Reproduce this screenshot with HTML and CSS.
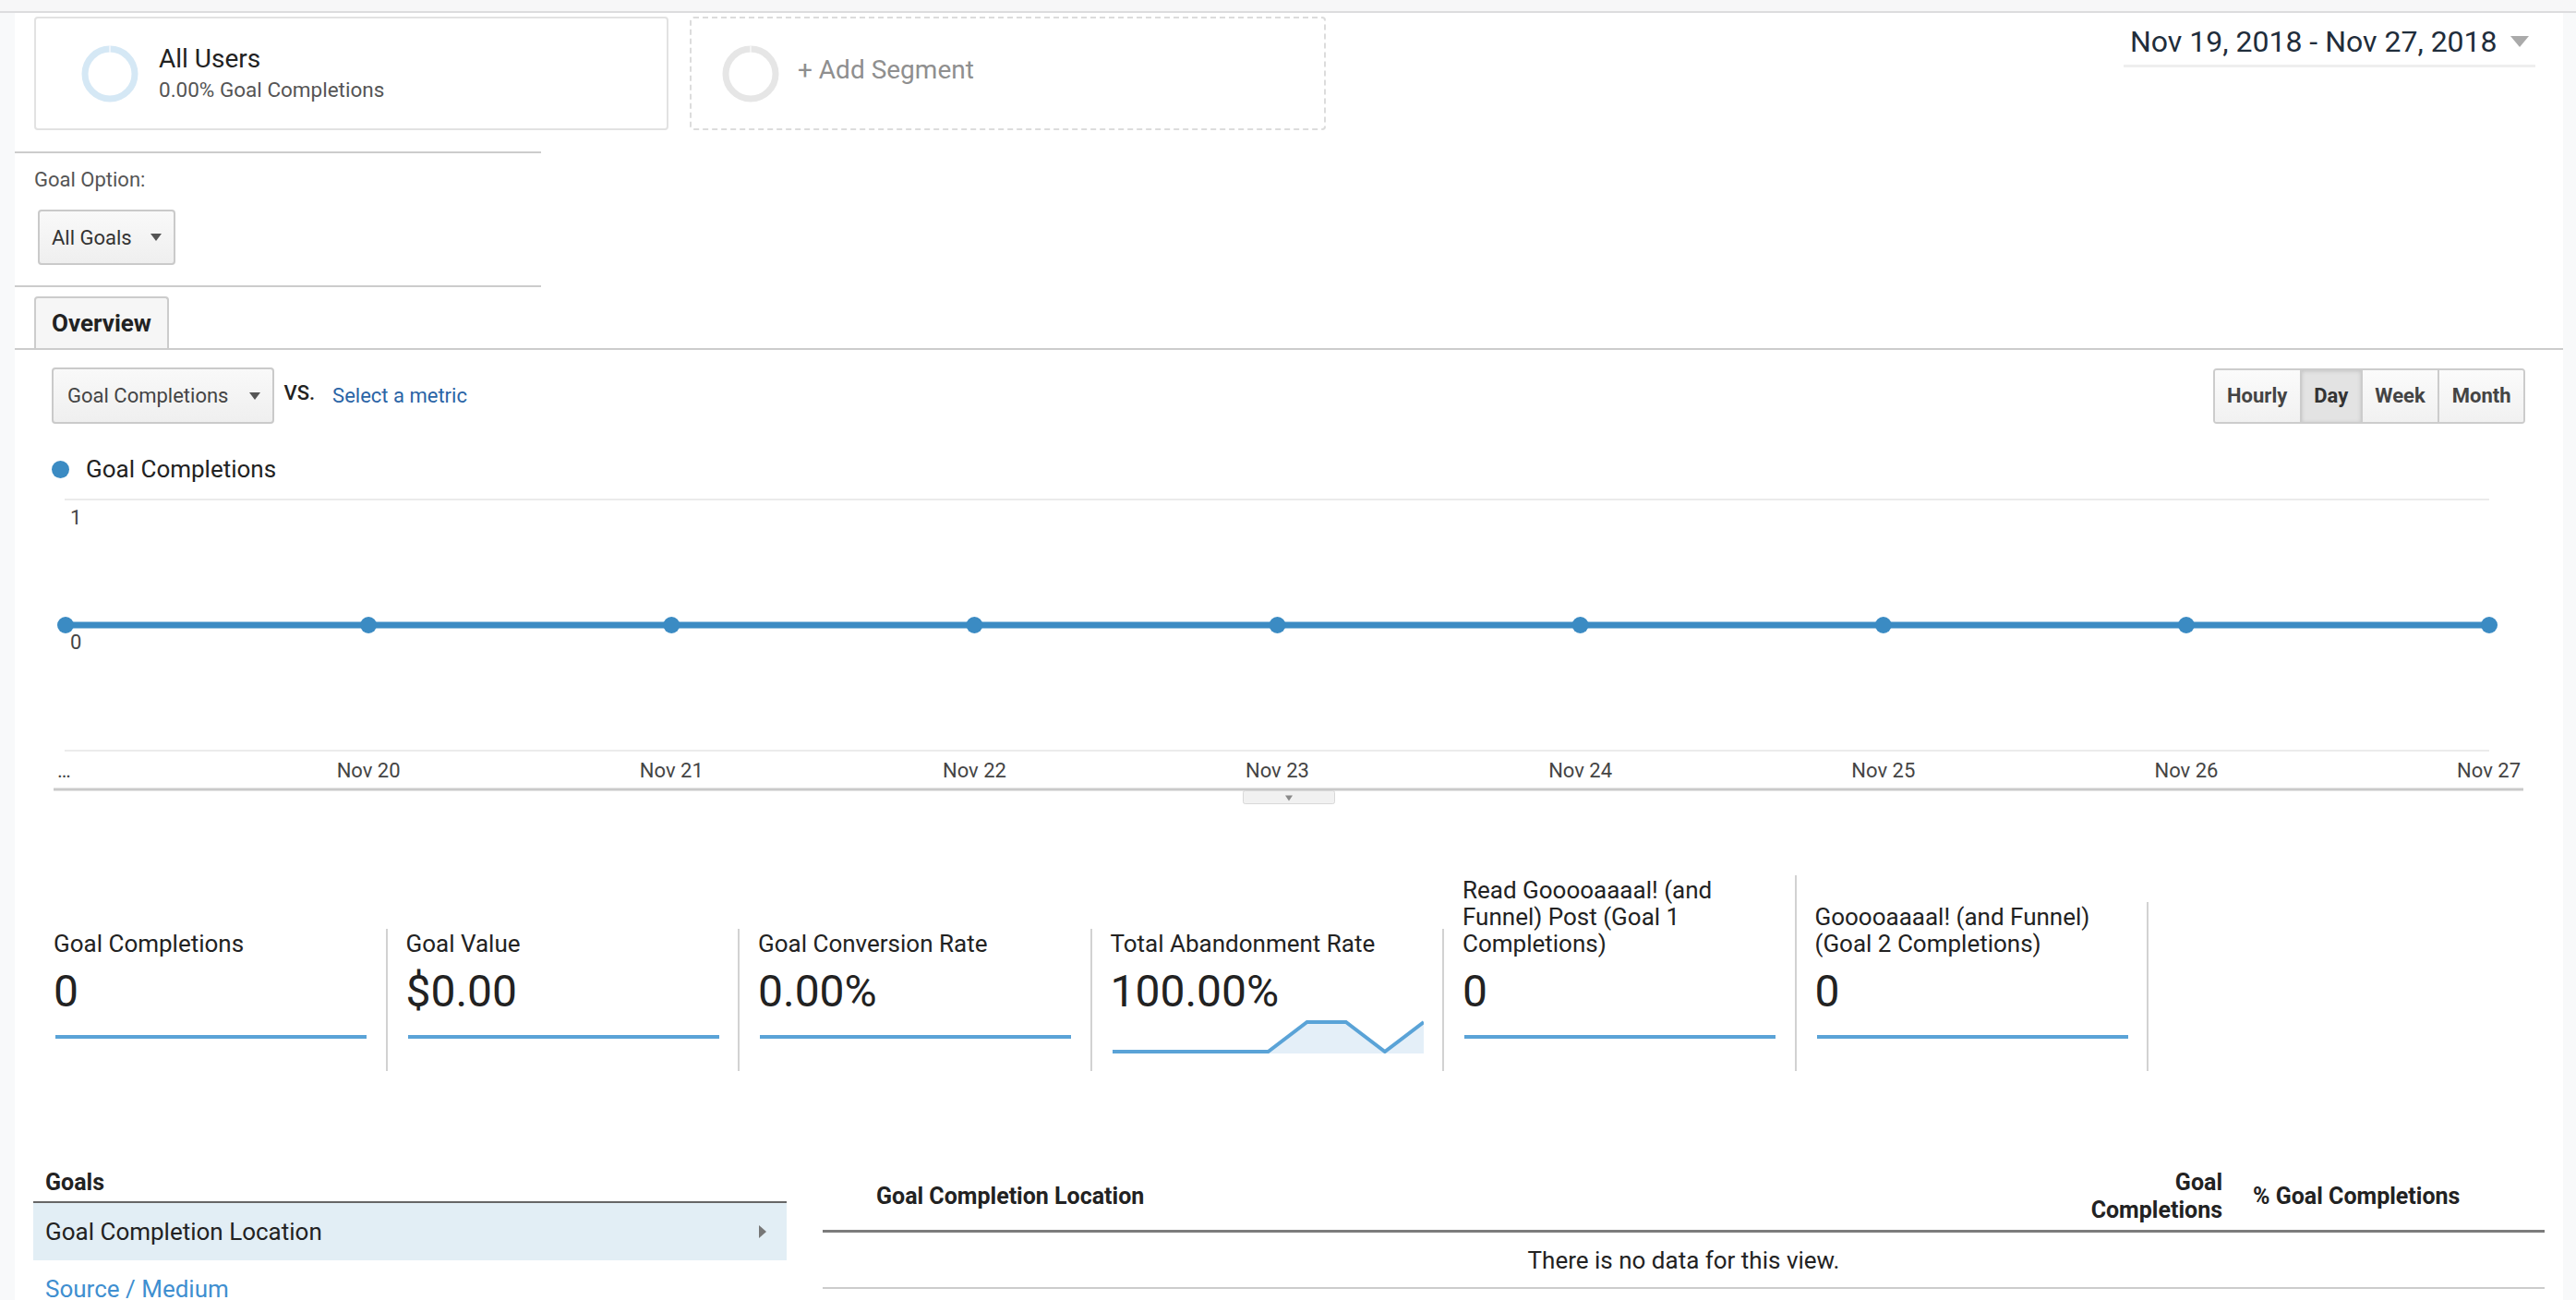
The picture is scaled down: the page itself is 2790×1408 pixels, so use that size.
FILE: index.html
```html
<!DOCTYPE html>
<html lang="en">
<head>
<meta charset="utf-8">
<title>Goals Overview</title>
<link rel="stylesheet" href="styles.css">
</head>
<body>
<div class="topbar"></div>
<div class="layout">
  <div class="rail"></div>
  <main class="main">
    <section class="seg-row">
      <div class="segments">
        <div class="seg-card">
          <svg class="donut" width="62" height="62" viewBox="0 0 62 62"><circle cx="31" cy="31" r="27" fill="none" stroke="#d5e8f5" stroke-width="7"/><line x1="31" y1="0" x2="31" y2="8" stroke="#f4f9fd" stroke-width="1.5"/></svg>
          <div class="seg-text">
            <div class="seg-title">All Users</div>
            <div class="seg-sub">0.00% Goal Completions</div>
          </div>
        </div>
        <div class="seg-card seg-add">
          <svg class="donut" width="62" height="62" viewBox="0 0 62 62"><circle cx="31" cy="31" r="27" fill="none" stroke="#e6e6e6" stroke-width="7"/><line x1="31" y1="0" x2="31" y2="8" stroke="#f7f7f7" stroke-width="1.5"/></svg>
          <div class="seg-add-label">+ Add Segment</div>
        </div>
      </div>
      <div class="daterange">
        <span>Nov 19, 2018 - Nov 27, 2018</span>
        <span class="caret-lg"></span>
      </div>
    </section>

    <section class="goal-option">
      <div class="go-label">Goal Option:</div>
      <div class="select select-goals">All Goals <span class="caret"></span></div>
    </section>

    <nav class="tabs"><div class="tab">Overview</div></nav>

    <div class="toolbar">
      <div class="metric-pick">
        <div class="select select-metric">Goal Completions <span class="caret"></span></div>
        <span class="vs">VS.</span>
        <span class="link">Select a metric</span>
      </div>
      <div class="periods">
        <div class="period">Hourly</div>
        <div class="period active">Day</div>
        <div class="period">Week</div>
        <div class="period">Month</div>
      </div>
    </div>

    <div class="legend"><span class="legend-dot"></span><span>Goal Completions</span></div>

    <div class="chart">
      <svg width="2760" height="356" viewBox="0 0 2760 356">
        <line x1="54" y1="17" x2="2680" y2="17" stroke="#ebebeb" stroke-width="2"/>
        <line x1="54" y1="289" x2="2680" y2="289" stroke="#ebebeb" stroke-width="2"/>
        <text class="ax" x="60" y="43.5">1</text>
        <line x1="55" y1="153" x2="2680" y2="153" stroke="#3b8bc3" stroke-width="7"/>
        <g fill="#3b8bc3">
          <circle cx="55" cy="153" r="9"/>
          <circle cx="383.1" cy="153" r="9"/>
          <circle cx="711.3" cy="153" r="9"/>
          <circle cx="1039.4" cy="153" r="9"/>
          <circle cx="1367.5" cy="153" r="9"/>
          <circle cx="1695.6" cy="153" r="9"/>
          <circle cx="2023.8" cy="153" r="9"/>
          <circle cx="2351.9" cy="153" r="9"/>
          <circle cx="2680" cy="153" r="9"/>
        </g>
        <text class="ax" x="60" y="179">0</text>
        <text class="ax" x="46" y="317.5">…</text>
        <text class="ax mid" x="383.1" y="317.5">Nov 20</text>
        <text class="ax mid" x="711.3" y="317.5">Nov 21</text>
        <text class="ax mid" x="1039.4" y="317.5">Nov 22</text>
        <text class="ax mid" x="1367.5" y="317.5">Nov 23</text>
        <text class="ax mid" x="1695.6" y="317.5">Nov 24</text>
        <text class="ax mid" x="2023.8" y="317.5">Nov 25</text>
        <text class="ax mid" x="2351.9" y="317.5">Nov 26</text>
        <text class="ax end" x="2714" y="317.5">Nov 27</text>
        <line x1="42" y1="331" x2="2717" y2="331" stroke="#c9c9c9" stroke-width="3"/>
        <rect x="1330.5" y="332.5" width="99" height="14" rx="2" fill="#f1f1f1" stroke="#d8d8d8"/>
        <path d="M1376 337.5 L1384 337.5 L1380 343.5 Z" fill="#8a8a8a"/>
      </svg>
    </div>

    <section class="metrics">
      <div class="metric">
        <div class="m-label">Goal Completions</div>
        <div class="m-value">0</div>
        <svg class="spark" width="337" height="36" viewBox="0 0 337 36"><line x1="0" y1="18" x2="337" y2="18"/></svg>
      </div>
      <div class="metric">
        <div class="m-label">Goal Value</div>
        <div class="m-value">$0.00</div>
        <svg class="spark" width="337" height="36" viewBox="0 0 337 36"><line x1="0" y1="18" x2="337" y2="18"/></svg>
      </div>
      <div class="metric">
        <div class="m-label">Goal Conversion Rate</div>
        <div class="m-value">0.00%</div>
        <svg class="spark" width="337" height="36" viewBox="0 0 337 36"><line x1="0" y1="18" x2="337" y2="18"/></svg>
      </div>
      <div class="metric">
        <div class="m-label">Total Abandonment Rate</div>
        <div class="m-value">100.00%</div>
        <svg class="spark" width="337" height="36" viewBox="0 0 337 36"><polygon class="area" points="0,34 168.5,34 210.6,2 252.75,2 294.9,34 337,2 337,36 0,36"/><polyline points="0,34 168.5,34 210.6,2 252.75,2 294.9,34 337,2"/></svg>
      </div>
      <div class="metric">
        <div class="m-label">Read Gooooaaaal! (and Funnel) Post (Goal 1 Completions)</div>
        <div class="m-value">0</div>
        <svg class="spark" width="337" height="36" viewBox="0 0 337 36"><line x1="0" y1="18" x2="337" y2="18"/></svg>
      </div>
      <div class="metric">
        <div class="m-label">Gooooaaaal! (and Funnel) (Goal 2 Completions)</div>
        <div class="m-value">0</div>
        <svg class="spark" width="337" height="36" viewBox="0 0 337 36"><line x1="0" y1="18" x2="337" y2="18"/></svg>
      </div>
    </section>

    <section class="report">
      <div class="goals-panel">
        <div class="goals-head">Goals</div>
        <div class="goals-row active"><span>Goal Completion Location</span><span class="tri-right"></span></div>
        <div class="goals-row link-row"><span>Source / Medium</span></div>
      </div>
      <div class="table">
        <div class="t-head">
          <div></div>
          <div class="th">Goal Completion Location</div>
          <div class="th right">Goal<br>Completions</div>
          <div class="th pct">% Goal Completions</div>
        </div>
        <div class="t-empty">There is no data for this view.</div>
      </div>
    </section>
  </main>
  <div class="rail rail-right"></div>
</div>
</body>
</html>
```

FILE: styles.css
```css
html, body {
  margin: 0;
  padding: 0;
}
body {
  font-family: Roboto, "Liberation Sans", Arial, sans-serif;
  color: #222;
  background: #fff;
  overflow: hidden;
}

.topbar {
  height: 12px;
  background: #f7f7f8;
  border-bottom: 2px solid #dcdcde;
}

.layout {
  display: flex;
  min-height: 1394px;
}
.rail {
  width: 16px;
  flex: none;
  background: #f8f9fa;
}
.rail-right {
  width: 14px;
}
.main {
  flex: 1;
  min-width: 0;
}

/* Segments */
.seg-row {
  display: flex;
  justify-content: space-between;
  align-items: flex-start;
}
.segments {
  display: flex;
  gap: 23px;
  margin: 4px 0 0 21px;
}
.seg-card {
  width: 687px;
  height: 123px;
  box-sizing: border-box;
  border: 2px solid #e2e2e2;
  border-radius: 4px;
  display: flex;
  align-items: center;
  padding-left: 49px;
}
.seg-add {
  width: 689px;
  border: 2px dashed #dcdcdc;
  padding-left: 33px;
}
.donut {
  flex: none;
  display: block;
}
.seg-text {
  margin-left: 22px;
}
.seg-title {
  font-size: 28px;
  line-height: 32px;
  color: #222;
}
.seg-sub {
  font-size: 22.5px;
  line-height: 28px;
  margin-top: 3px;
  color: #555;
}
.seg-add-label {
  margin-left: 20px;
  margin-bottom: 8px;
  font-size: 28px;
  line-height: 34px;
  color: #8f8f8f;
}

.daterange {
  margin: 12px 30px 0 0;
  width: 446px;
  box-sizing: border-box;
  display: flex;
  align-items: center;
  justify-content: space-between;
  padding: 0 7px 6px 7px;
  border-bottom: 3px solid #eeeeee;
  font-size: 32px;
  line-height: 38px;
  color: #1f2d3b;
}
.caret-lg {
  width: 0;
  height: 0;
  border-left: 10.5px solid transparent;
  border-right: 10.5px solid transparent;
  border-top: 12px solid #aaaaaa;
}

/* Goal option */
.goal-option {
  width: 570px;
  margin-top: 23px;
  border-top: 2px solid #cccccc;
  border-bottom: 2px solid #cccccc;
  padding: 17px 0 22px 21px;
  box-sizing: border-box;
}
.go-label {
  font-size: 22px;
  line-height: 24px;
  color: #555;
}
.select {
  display: inline-flex;
  align-items: center;
  height: 60px;
  box-sizing: border-box;
  border: 2px solid #cacaca;
  border-radius: 4px;
  background: linear-gradient(#f9f9f9, #efefef);
  font-size: 22px;
  color: #333;
}
.select-goals {
  margin: 20px 0 0 4px;
  padding: 0 13px;
  gap: 20px;
}
.select-metric {
  height: 61px;
  padding: 0 13px 0 15px;
  gap: 23px;
  color: #444;
}
.caret {
  width: 0;
  height: 0;
  border-left: 6px solid transparent;
  border-right: 6px solid transparent;
  border-top: 8px solid #555;
}

/* Tabs */
.tabs {
  display: flex;
  margin-top: 10px;
  padding-left: 21px;
  border-bottom: 2px solid #cccccc;
}
.tab {
  height: 56px;
  box-sizing: border-box;
  border: 2px solid #cccccc;
  border-bottom: none;
  border-radius: 4px 4px 0 0;
  background: #f6f6f6;
  padding: 0 17px;
  display: flex;
  align-items: center;
  font-size: 26px;
  font-weight: 700;
  color: #222;
}

/* Toolbar */
.toolbar {
  display: flex;
  align-items: center;
  justify-content: space-between;
  margin-top: 19px;
  height: 61px;
  padding: 0 41px 0 40px;
}
.metric-pick {
  display: flex;
  align-items: center;
}
.vs {
  margin: 0 19px 6px 10px;
  font-size: 22px;
  font-weight: 500;
  color: #222;
}
.link {
  font-size: 22px;
  color: #2a64a6;
}
.periods {
  display: flex;
  height: 60px;
  box-sizing: border-box;
  border: 2px solid #cccccc;
  border-radius: 4px;
  overflow: hidden;
}
.period {
  display: flex;
  align-items: center;
  padding: 0 13.5px;
  font-size: 22px;
  font-weight: 700;
  color: #444;
  background: linear-gradient(#fbfbfb, #f1f1f1);
  border-left: 2px solid #cccccc;
}
.period:first-child {
  border-left: none;
}
.period.active {
  background: #e3e3e3;
  box-shadow: inset 0 1px 4px rgba(0, 0, 0, 0.15);
  color: #333;
}

/* Legend */
.legend {
  display: flex;
  align-items: center;
  margin-top: 33px;
  height: 32px;
  padding-left: 40px;
  font-size: 26px;
  color: #222;
}
.legend-dot {
  width: 19px;
  height: 19px;
  border-radius: 50%;
  background: #3b8bc3;
  margin-right: 18px;
}

/* Chart */
.chart {
  height: 356px;
}
.chart svg {
  display: block;
}
.ax {
  font-family: Roboto, "Liberation Sans", Arial, sans-serif;
  font-size: 22px;
  fill: #444;
}
.ax.mid {
  text-anchor: middle;
}
.ax.end {
  text-anchor: end;
}

/* Metrics */
.metrics {
  display: flex;
  align-items: flex-end;
  margin: 68px 0 0 22px;
}
.metric {
  width: 381.5px;
  box-sizing: border-box;
  padding: 2px 20px 19px 20px;
  border-right: 2px solid #d2d2d2;
}
.m-label {
  font-size: 26px;
  line-height: 29px;
  color: #222;
}
.m-value {
  margin-top: 9px;
  font-size: 48px;
  line-height: 56px;
  color: #222;
}
.spark {
  display: block;
  margin: 3px 0 0 2px;
}
.spark line,
.spark polyline {
  fill: none;
  stroke: #5aa3d7;
  stroke-width: 4;
}
.spark .area {
  fill: #e4eff8;
}

/* Report */
.report {
  display: flex;
  align-items: flex-start;
  gap: 39px;
  margin-top: 106px;
  padding: 0 20px;
}
.goals-panel {
  width: 816px;
  flex: none;
}
.goals-head {
  font-size: 25px;
  font-weight: 700;
  line-height: 30px;
  padding: 0 13px 5px;
  border-bottom: 2px solid #666;
}
.goals-row {
  height: 62px;
  display: flex;
  align-items: center;
  justify-content: space-between;
  padding: 0 22px 0 13px;
  font-size: 26px;
  color: #222;
}
.goals-row.active {
  background: #e2eef5;
}
.link-row {
  color: #3f8fd0;
}
.tri-right {
  width: 0;
  height: 0;
  border-top: 7px solid transparent;
  border-bottom: 7px solid transparent;
  border-left: 8px solid #777;
}
.table {
  flex: 1;
  min-width: 0;
}
.t-head {
  display: grid;
  grid-template-columns: 58px 1fr 170px 336px;
  align-items: center;
  padding-bottom: 6px;
  border-bottom: 3px solid #7c7c7c;
}
.th {
  font-size: 25px;
  font-weight: 700;
  line-height: 30px;
  color: #222;
}
.th.right {
  text-align: right;
  padding-right: 13px;
}
.th.pct {
  padding-left: 20px;
}
.t-empty {
  height: 59px;
  display: flex;
  align-items: center;
  justify-content: center;
  font-size: 26px;
  color: #222;
  border-bottom: 2px solid #cccccc;
}
```
